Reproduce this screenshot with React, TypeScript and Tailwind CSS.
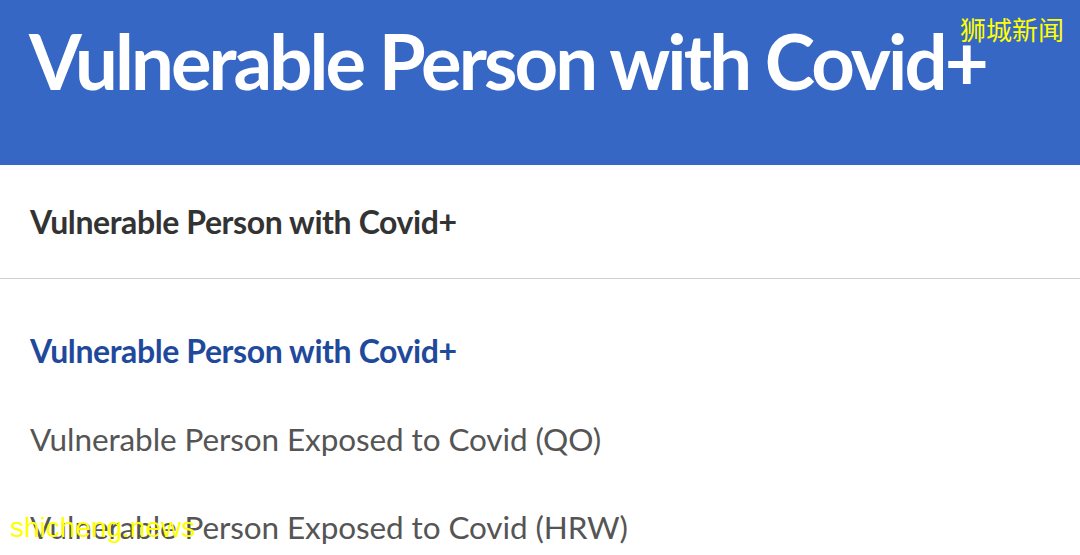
export default function App() {
  const lato = { fontFamily: "Lato, 'Noto Sans', sans-serif" };
  return (
    <div className="relative w-[1080px] h-[555px] overflow-hidden bg-white" style={lato}>
      <div className="h-[165px] bg-[#3767c4] pl-[29px] pt-[17px]">
        <h1 className="text-[76px] font-bold text-white leading-[88px] tracking-[-2.9px] whitespace-nowrap">
          Vulnerable Person with Covid+
        </h1>
      </div>
      <div className="h-[114px] flex items-center pl-[30px] border-b border-[#cfcfcf]">
        <div className="text-[32px] font-bold text-[#333333] tracking-[-0.4px] whitespace-nowrap">
          Vulnerable Person with Covid+
        </div>
      </div>
      <div className="pl-[30px] pt-[50px] flex flex-col gap-[44px]">
        <div className="text-[32px] leading-[44px] font-bold text-[#1f4a9c] tracking-[-0.4px] whitespace-nowrap">
          Vulnerable Person with Covid+
        </div>
        <div className="text-[31.5px] leading-[44px] text-[#555555] tracking-[-0.1px] whitespace-nowrap">
          Vulnerable Person Exposed to Covid (QO)
        </div>
        <div className="text-[31.5px] leading-[44px] text-[#555555] tracking-[-0.1px] whitespace-nowrap">
          Vulnerable Person Exposed to Covid (HRW)
        </div>
      </div>
      <div
        className="absolute left-[960px] top-[16px] text-[26px] text-[#ffff00] leading-none"
        style={{ fontFamily: "'Noto Sans CJK SC', sans-serif" }}
      >
        狮城新闻
      </div>
      <div
        className="absolute left-[10px] top-[514px] text-[28px] text-[#ffff00] leading-none"
        style={{ fontFamily: "'Liberation Sans', sans-serif" }}
      >
        shicheng.news
      </div>
    </div>
  );
}
